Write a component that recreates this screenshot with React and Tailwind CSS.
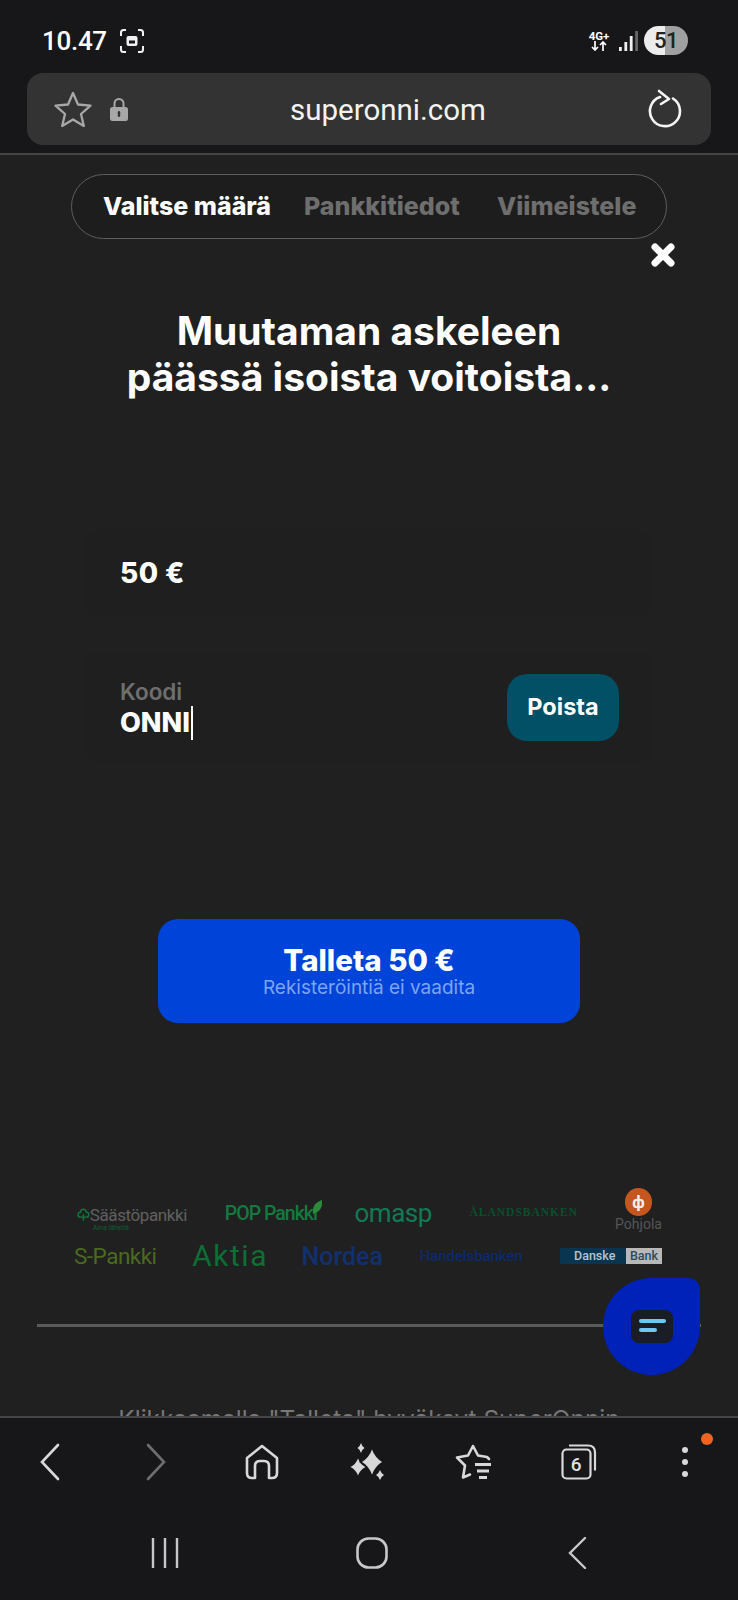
const F = { fontFamily: 'Roboto, "Liberation Sans", sans-serif' };
const I = { fontFamily: 'Inter, "Liberation Sans", sans-serif' };

const star = (x, y, rx, ry) =>
  `M${x} ${y - ry}Q${x + rx * 0.3} ${y - ry * 0.3} ${x + rx} ${y}Q${x + rx * 0.3} ${y + ry * 0.3} ${x} ${y + ry}Q${x - rx * 0.3} ${y + ry * 0.3} ${x - rx} ${y}Q${x - rx * 0.3} ${y - ry * 0.3} ${x} ${y - ry}Z`;

function Status() {
  return (
    <div className="flex h-[73px] shrink-0 items-center bg-[#17171a] pl-[42px] pr-[50px] pt-[8px] text-white">
      <span className="text-[26px] font-medium leading-none tracking-[-0.3px]">10.47</span>
      <svg className="ml-[13px]" width="24" height="24" viewBox="0 0 24 24" fill="none" stroke="#f0f0f0" strokeWidth="2">
        <path d="M1 7V3.500Q1 1 3.500 1H6M18 1h2.500Q23 1 23 3.500V7M1 17v3.500Q1 23 3.500 23H6M18 23h2.500Q23 23 23 20.500V17" />
        <rect x="6.500" y="7" width="11" height="10" rx="2" fill="#f0f0f0" stroke="none" />
        <rect x="9" y="11.500" width="6" height="3" fill="#17171a" stroke="none" />
      </svg>
      <div className="ml-auto flex items-center">
        <div className="flex w-[24px] flex-col items-center text-[11.500px] font-bold leading-[10px]">
          <span>4G+</span>
          <svg width="18" height="10" viewBox="0 0 18 10" fill="none" stroke="#fff" strokeWidth="1.700">
            <path d="M5 0v9M2 6l3 3 3-3M13 10V1M10 4l3-3 3 3" />
          </svg>
        </div>
        <svg className="ml-[8px]" width="19" height="20" viewBox="0 0 19 20">
          <rect x="0" y="16" width="2.800" height="4" fill="#f0f0f0" />
          <rect x="5.400" y="11" width="2.800" height="9" fill="#f0f0f0" />
          <rect x="10.800" y="5" width="2.800" height="15" fill="#f0f0f0" />
          <rect x="16.200" y="0" width="2.800" height="20" fill="#666" />
        </svg>
        <div className="ml-[6px] flex h-[29px] w-[44px] items-center justify-center rounded-full bg-[linear-gradient(90deg,#ececec_0,#ececec_48%,#a0a0a0_48%,#a0a0a0_100%)] text-[22px] font-medium leading-none tracking-[-0.5px] text-[#222]">
          51
        </div>
      </div>
    </div>
  );
}

function UrlBar() {
  return (
    <div className="shrink-0 border-b-[2px] border-[#454545] bg-[#17171a] px-[27px] pb-[8px]">
      <div className="flex h-[72px] items-center rounded-[16px] bg-[#333334] pl-[27px] pr-[28px]">
        <svg width="38" height="36" viewBox="0 0 38 36" fill="none" stroke="#a8a8a8" strokeWidth="2.300" strokeLinejoin="round">
          <path d="M19 2l5 11.500 12.500 1.200-9.500 8.300 2.800 12-10.800-6.500-10.800 6.500 2.800-12-9.500-8.300 12.500-1.200z" />
        </svg>
        <svg className="ml-[18px]" width="18" height="24" viewBox="0 0 18 24">
          <path d="M4.500 11V6.500a4.500 4.500 0 0 1 9 0V11" fill="none" stroke="#a8a8a8" strokeWidth="2" />
          <rect x="0" y="10" width="18" height="14" rx="2.500" fill="#a8a8a8" />
          <rect x="7.800" y="14" width="2.400" height="6" rx="1.200" fill="#333334" />
        </svg>
        <span className="ml-[162px] pt-[3px] text-[29.500px] leading-none text-[#f2f2f2]">superonni.com</span>
        <svg className="ml-auto" width="36" height="40" viewBox="0 0 36 40" fill="none" stroke="#f4f4f4" strokeWidth="2.600" strokeLinecap="round" strokeLinejoin="round">
          <path d="M13 8A15 15 0 1 0 26 9.500" />
          <path d="M12 2l10 8-8 5" />
        </svg>
      </div>
    </div>
  );
}

function Logos() {
  return (
    <div className="mt-[165px] flex flex-col" style={F}>
      <div className="flex h-[44px] items-center justify-between pl-[77px] pr-[78px]">
        <div className="flex w-[110px] items-start pt-[16px]">
          <svg width="18" height="20" viewBox="0 0 18 20" fill="none" stroke="#0f7a3e" strokeWidth="2">
            <path d="M9 2a4 4 0 0 1 4 4 3.500 3.500 0 0 1 0 7H5a3.500 3.500 0 0 1 0-7 4 4 0 0 1 4-4z" />
            <path d="M9 9v9" />
          </svg>
          <div className="flex flex-col">
            <span className="text-[17px] leading-[20px] tracking-[-0.4px] text-[#606060]">Säästöpankki</span>
            <span className="ml-[3px] text-[7px] leading-[7px] text-[#0f5f33]">Aina lähellä</span>
          </div>
        </div>
        <div className="flex w-[92px] items-center whitespace-nowrap pt-[8px] text-[19.500px] font-medium leading-none tracking-[-1px] text-[#137a3d]">
          <span>POP Pankki</span>
          <svg width="10" height="14" viewBox="0 0 10 14" className="ml-[-5px] mt-[-14px] shrink-0"><path d="M1 14C0 6 4 2 10 0c1 7-2 12-9 14z" fill="#2c8a3c" /></svg>
        </div>
        <div className="w-[76px] pt-[6px] text-[26px] leading-none tracking-[-0.5px] text-[#117a55]">omasp</div>
        <div className="w-[111px] whitespace-nowrap pt-[6px] text-center text-[11.500px] font-bold leading-none tracking-[1px] text-[#0a4f2c]" style={{ fontFamily: '"Liberation Serif", serif' }}>ÅLANDSBANKEN</div>
        <div className="flex w-[43px] flex-col items-center">
          <div className="flex h-[28px] w-[27px] items-center justify-center rounded-full bg-[#c6561f] text-[17px] font-bold leading-none text-[#eee]">ф</div>
          <span className="text-[14px] leading-[16px] text-[#555]">Pohjola</span>
        </div>
      </div>
      <div className="mt-[6px] flex h-[36px] items-center justify-between pl-[74px] pr-[76px]">
        <span className="w-[82px] whitespace-nowrap text-[22.500px] leading-none tracking-[-0.5px] text-[#4a6a20]">S-Pankki</span>
        <span className="w-[73px] text-[30px] leading-none tracking-[1.500px] text-[#0e6e34]">Aktia</span>
        <span className="w-[82px] text-[25px] font-medium leading-none text-[#12306e]">Nordea</span>
        <span className="w-[104px] text-[15px] font-medium leading-none tracking-[-0.1px] text-[#0c2a6a]">Handelsbanken</span>
        <div className="flex h-[16px] w-[102px] items-center bg-[#0a3550] text-[12.500px] font-medium leading-none text-[#b4c4d0]">
          <span className="ml-[14px] flex-1">Danske</span>
          <span className="flex h-full w-[36px] items-center justify-center bg-[#b8b8b8] text-[#2c4a5e]">Bank</span>
        </div>
      </div>
    </div>
  );
}

function Content() {
  return (
    <div className="relative min-h-0 flex-1 overflow-hidden bg-[#202020]" style={I}>
      <div className="mx-[71px] mt-[19px] flex h-[65px] items-center rounded-full border border-[#5e5e5e] bg-[#1d1d1d] pl-[31px] text-[25px] font-extrabold leading-none">
        <span className="w-[201px] whitespace-nowrap text-white">Valitse määrä</span>
        <span className="w-[193px] whitespace-nowrap text-[#6e6e6e]">Pankkitiedot</span>
        <span className="whitespace-nowrap text-[#6e6e6e]">Viimeistele</span>
      </div>
      <svg className="absolute left-[650px] top-[87px]" width="26" height="26" viewBox="0 0 26 26" stroke="#fff" strokeWidth="7" strokeLinecap="round">
        <path d="M5 5l16 16M21 5L5 21" />
      </svg>
      <h1 className="mt-[69px] text-center text-[39px] font-bold leading-[46px] text-white">
        Muutaman askeleen
        <br />
        päässä isoista voitoista...
      </h1>
      <div className="mx-[85px] mb-[35px] mt-[130px] flex h-[86px] items-center rounded-[16px] bg-[#1f1f1f] px-[35px] text-[28px] font-extrabold leading-none tracking-[0.4px] text-white">
        50 €
      </div>
      <div className="mx-[85px] flex h-[112px] items-center justify-between rounded-[16px] bg-[#1f1f1f] pl-[35px] pr-[34px]">
        <div className="flex flex-col pt-[3px]">
          <span className="text-[22.500px] font-semibold leading-[28px] text-[#6e6e6e]">Koodi</span>
          <div className="flex items-center text-[27px] font-extrabold leading-[30px] text-white">
            ONNI
            <span className="ml-[1px] h-[34px] w-[2px] bg-white" />
          </div>
        </div>
        <button className="flex h-[67px] w-[112px] items-center justify-center rounded-[20px] bg-[#015066] text-[23.500px] font-bold leading-none text-white">
          Poista
        </button>
      </div>
      <button className="mx-[158px] mt-[156px] flex h-[104px] w-[422px] flex-col items-center justify-center rounded-[20px] bg-[#0043d8]">
        <span className="text-[29.500px] font-extrabold leading-[34px] text-white">Talleta 50 €</span>
        <span className="text-[19px] leading-[22px] text-[#7ba5f5]">Rekisteröintiä ei vaadita</span>
      </button>
      <Logos />
      <div className="mx-[37px] mt-[50px] h-[3px] bg-[#5a5a5a]" />
      <p className="mt-[78px] whitespace-nowrap text-center text-[24.400px] leading-[28px] text-[#777]">
        Klikkaamalla "Talleta" hyväksyt SuperOnnin
      </p>
      <div className="absolute left-[603px] top-[1123px] flex h-[97px] w-[97px] items-center justify-center rounded-[50%_12%_50%_50%] bg-[#0022b8]">
        <div className="flex h-[33px] w-[42px] flex-col gap-[5px] rounded-[8px] bg-[#1a1d24] pl-[8px] pt-[9px]">
          <div className="h-[4px] w-[27px] rounded-full bg-[#6ec6f5]" />
          <div className="h-[4px] w-[18px] rounded-full bg-[#6ec6f5]" />
        </div>
      </div>
    </div>
  );
}

const Slot = ({ children }) => <div className="flex w-[44px] justify-center">{children}</div>;

function Nav() {
  return (
    <div className="relative flex h-[184px] shrink-0 flex-col border-t-[2px] border-[#454545] bg-[#17171a]">
      <div className="mt-[18px] flex h-[52px] items-center justify-between pl-[28px] pr-[31px]">
        <Slot>
          <svg width="22" height="38" viewBox="0 0 22 38" fill="none" stroke="#d8d8d8" strokeWidth="2.600" strokeLinecap="round"><path d="M19 2L3 19l16 17" /></svg>
        </Slot>
        <Slot>
          <svg width="22" height="38" viewBox="0 0 22 38" fill="none" stroke="#6e6e6e" strokeWidth="2.600" strokeLinecap="round"><path d="M3 2l16 17L3 36" /></svg>
        </Slot>
        <Slot>
          <svg width="34" height="36" viewBox="0 0 34 36" fill="none" stroke="#d8d8d8" strokeWidth="2.600" strokeLinejoin="round"><path d="M2 14L17 2l15 12v15q0 5-5 5h-3V22q0-5-5-5h-4q-5 0-5 5v12H7q-5 0-5-5z" /></svg>
        </Slot>
        <Slot>
          <svg width="35" height="38" viewBox="0 0 35 38" fill="#d8d8d8">
            <path d={star(8, 24, 7.5, 8.5)} />
            <path d={star(22, 19, 11.5, 14.5)} stroke="#17171a" strokeWidth="1.500" />
            <path d={star(11, 5, 3.5, 5)} />
            <path d={star(30, 32, 4, 5)} />
          </svg>
        </Slot>
        <Slot>
          <svg width="38" height="36" viewBox="0 0 38 36" fill="none" stroke="#d8d8d8" strokeWidth="2.600" strokeLinejoin="round" strokeLinecap="round">
            <path d="M35 15l-2-2-9-1.500L19 2 14 11.500 3 13.500l8 8-2 12 7-3" />
            <path d="M21 20.500h16M23 27h12M25 33.500h8" strokeWidth="2.800" strokeLinecap="butt" />
          </svg>
        </Slot>
        <Slot>
          <div className="relative h-[36px] w-[36px]">
            <svg className="absolute inset-0" width="36" height="36" viewBox="0 0 36 36" fill="none" stroke="#d8d8d8" strokeWidth="2.200">
              <path d="M8 1.500h19q7 0 7 7v18" />
              <rect x="1.500" y="5.500" width="28" height="29" rx="4" />
            </svg>
            <span className="absolute left-[1px] top-[6px] flex h-[28px] w-[28px] items-center justify-center text-[19px] font-medium leading-none text-[#e0e0e0]" style={F}>6</span>
          </div>
        </Slot>
        <Slot>
          <div className="flex flex-col gap-[6px]">
            <div className="h-[6px] w-[6px] rounded-full bg-[#d8d8d8]" />
            <div className="h-[6px] w-[6px] rounded-full bg-[#d8d8d8]" />
            <div className="h-[6px] w-[6px] rounded-full bg-[#d8d8d8]" />
          </div>
        </Slot>
      </div>
      <div className="absolute left-[701px] top-[15px] h-[12px] w-[12px] rounded-full bg-[#f0641e]" />
      <div className="mt-[49px] flex h-[32px] items-center justify-between pl-[150px] pr-[144px]">
        <svg width="30" height="30" viewBox="0 0 30 30" stroke="#c8c8c8" strokeWidth="2.400"><path d="M3 0v30M15 0v30M27 0v30" /></svg>
        <svg width="32" height="32" viewBox="0 0 32 32" fill="none" stroke="#c8c8c8" strokeWidth="2.600"><rect x="1.500" y="1.500" width="29" height="29" rx="11" /></svg>
        <svg width="30" height="32" viewBox="0 0 30 32" fill="none" stroke="#c8c8c8" strokeWidth="2.400" strokeLinecap="round"><path d="M21 1L6 16l15 15" /></svg>
      </div>
    </div>
  );
}

export default function App() {
  return (
    <div className="flex h-[1600px] w-[738px] flex-col overflow-hidden" style={F}>
      <Status />
      <UrlBar />
      <Content />
      <Nav />
    </div>
  );
}
